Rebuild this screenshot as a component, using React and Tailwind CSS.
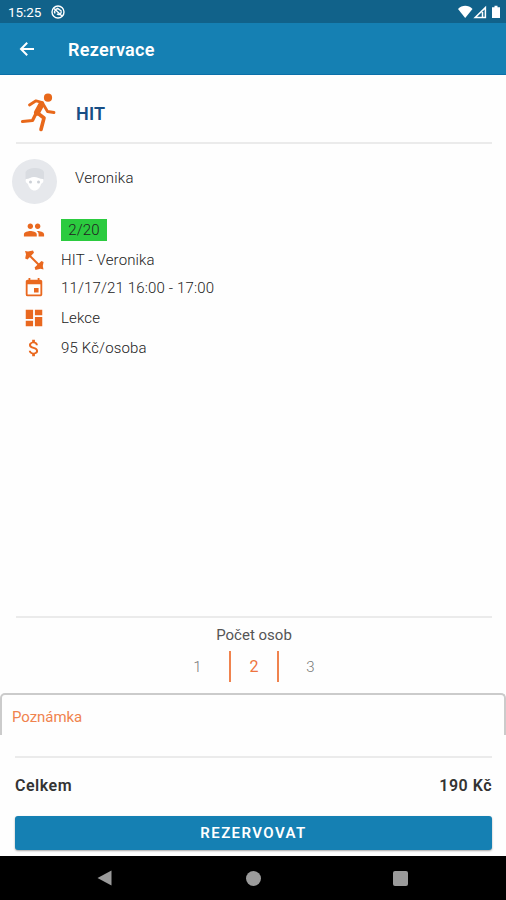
import { MdAttachMoney, MdDashboard, MdEvent, MdPeople } from 'react-icons/md'

const DETAILS = [
  { id: 'capacity', icon: MdPeople, text: '2/20', badge: true, rowClass: 'h-[30px]' },
  { id: 'lesson', icon: DumbbellIcon, text: 'HIT - Veronika', rowClass: 'h-[29px]' },
  { id: 'date', icon: MdEvent, text: '11/17/21 16:00 - 17:00', rowClass: 'h-[28px]' },
  { id: 'type', icon: MdDashboard, text: 'Lekce', rowClass: 'h-[31px]' },
  { id: 'price', icon: MdAttachMoney, text: '95 Kč/osoba', rowClass: 'h-[30px]' },
]

export default function App() {
  return (
    <div className="flex h-[900px] w-[506px] flex-col overflow-hidden bg-[#fefefe] font-['Roboto',sans-serif] text-[#555]">
      <StatusBar />

      <header className="flex h-[52px] shrink-0 items-center border-b border-[#0b6fa8] bg-[#1580b3] pl-[17px] text-white">
        <BackIcon />
        <h1 className="ml-[31px] pt-[2px] text-[18px] font-semibold tracking-[0.3px]">Rezervace</h1>
      </header>

      <main className="flex min-h-0 flex-1 flex-col">
        <div className="mr-[14px] ml-4 flex h-[69px] shrink-0 items-center border-b-2 border-[#ebebeb] pt-[6px]">
          <RunnerIcon />
          <h2 className="ml-[16px] pt-[4px] text-[18px] font-semibold tracking-[0.2px] text-[#174e85]">HIT</h2>
        </div>

        <div className="mt-[14px] flex h-[46px] shrink-0 items-center pl-3">
          <Avatar />
          <span className="-mt-[5px] ml-[18px] text-[15px] font-light tracking-[0.2px] text-[#222]">Veronika</span>
        </div>

        <ul className="mt-[11px] flex flex-col">
          {DETAILS.map((d) => (
            <DetailRow key={d.id} {...d} />
          ))}
        </ul>

        {/* Number of people */}
        <section className="mt-auto mr-[14px] ml-4 h-[77px] shrink-0 border-t-2 border-[#ebebeb]">
          <p className="pt-[6px] text-center text-[15px] leading-[22px]">Počet osob</p>
          <div className="mt-[5px] flex justify-center text-[16px]">
            <span className="flex h-[31px] w-[63px] items-center justify-center pt-[2px] text-[15px] font-light text-[#777]">
              1
            </span>
            <span className="flex h-[31px] w-[50px] items-center justify-center border-x-2 border-[#f0834e] pt-px text-[16px] text-[#ee7440]">
              2
            </span>
            <span className="flex h-[31px] w-[63px] items-center justify-center pt-[2px] text-[15px] font-light text-[#777]">
              3
            </span>
          </div>
        </section>

        <div className="h-[42px] shrink-0 rounded-t-[5px] border-2 border-b-0 border-[#cbcbcb] pt-[11px] pl-[10px] text-[15px] leading-[22px] tracking-[-0.05px] text-[#f0834e]">
          Poznámka
        </div>

        <div className="mt-[21px] mr-[14px] ml-[15px] flex h-[60px] shrink-0 items-center justify-between border-t-2 border-[#ebebeb] pb-[3px] text-[16px] font-semibold text-[#333]">
          <span className="tracking-[0.5px]">Celkem</span>
          <span className="tracking-[0.5px]">190 Kč</span>
        </div>

        <button className="mr-[14px] mb-[6px] ml-[15px] flex h-[34px] shrink-0 items-center justify-center rounded-[3px] bg-[#1580b3] text-[15px] font-semibold tracking-[1.4px] text-white shadow-[0_1px_2px_rgba(0,0,0,0.35)]">
          REZERVOVAT
        </button>
      </main>

      <NavBar />
    </div>
  )
}

function StatusBar() {
  return (
    <div className="flex h-[23px] shrink-0 items-center bg-[#11628a] pr-[5px] pl-2 text-white">
      <span className="pt-[2px] text-[13.5px] tracking-[-0.1px]">15:25</span>
      <svg viewBox="0 0 14 14" className="ml-[10px] size-[14px]" fill="none" stroke="currentColor" strokeWidth="1.4">
        <circle cx="7" cy="7" r="6" />
        <path d="M3 3.5 11 11M4 8.5A3.2 3.2 0 0 1 8 4M6 8.7a2.4 2.4 0 0 0 4-2.5M6 3.2 10.5 6" />
      </svg>
      {/* wifi, signal, battery */}
      <svg viewBox="0 0 43 14" className="ml-auto h-[14px] w-[43px]" fill="currentColor">
        <path d="M0 4C4-.2 10.500-.2 14.500 4L7.200 13Z" />
        <path d="M27.400 2.600V12.400H17.200ZM24.500 7v5" fill="none" stroke="currentColor" strokeWidth="1.500" />
        <path d="M36.500 .8h3v1.400h2.500v10.800h-8V2.200h2.500Z" />
      </svg>
    </div>
  )
}

function BackIcon() {
  return (
    <svg viewBox="0 0 20 20" className="size-5" fill="none" stroke="currentColor" strokeWidth="2">
      <path d="M17 10H4M10.200 3.800 4 10l6.200 6.200" />
    </svg>
  )
}

function DetailRow({ icon: Icon, text, badge, rowClass }) {
  return (
    <li className={`flex items-center pl-[23px] text-[15px] font-light tracking-[0.15px] text-[#222] ${rowClass}`}>
      <Icon className="size-[22px] text-[#e9681f]" />
      {badge ? (
        <span className="ml-[16px] flex h-[22px] w-[46px] items-center justify-center bg-[#2bcb3f] pt-px">{text}</span>
      ) : (
        <span className="ml-[16px] pt-px">{text}</span>
      )}
    </li>
  )
}

function DumbbellIcon({ className }) {
  return (
    <svg viewBox="0 0 22 22" className={className} fill="currentColor">
      <path d="M2 2 5 2.600 10 1.500 11 3.800 4.500 10.400 2.200 9.500 3 5.300Z" />
      <path d="m20.500 20.500-3-.8-5 1.200-.9-2.300 6.800-6.600 2.200.9-.8 4Z" />
      <path d="M6 6 16.500 16.500" stroke="currentColor" strokeWidth="2" />
    </svg>
  )
}

function RunnerIcon() {
  return (
    <svg
      viewBox="18 90 42 44"
      className="ml-[2px] h-[44px] w-[42px]"
      fill="none"
      stroke="#e8681a"
      strokeWidth="2.800"
      strokeLinecap="round"
      strokeLinejoin="round"
    >
      <circle cx="48" cy="97.700" r="4.100" fill="#e8681a" stroke="none" />
      <path d="M29.500 105 36 100.800 42.500 102.500" />
      <path d="M44 105.500 47.500 111.500 54 112.500" />
      <path d="M36 113.500 32.500 120.500 22.500 121.500" strokeWidth="3.200" />
      <path d="M41.500 104.300 37 112.500" strokeWidth="6" />
      <path d="M37.500 113 44 118 41 129.500" strokeWidth="3.600" />
    </svg>
  )
}

function Avatar() {
  return (
    <svg viewBox="0 0 45 45" className="size-[45px]">
      <circle cx="22.500" cy="22.500" r="22.500" fill="#e6e8ec" />
      <path d="M13.500 20v-7c2-3 5-4 9-4 5 0 8 1 9.500 4v7Z" fill="#d9dce1" />
      <path
        d="M14 20c3 0 5-2 8-2s6 2 9 2c1 2 0 4-2 5-1 4-3.500 6.500-6.500 6.500S17 29 16 25c-2-1-3-3-2-5Z"
        fill="#fff"
      />
      <circle cx="18.500" cy="23" r="1.500" fill="#cdd1d7" />
      <circle cx="26.500" cy="23" r="1.500" fill="#cdd1d7" />
    </svg>
  )
}

function NavBar() {
  return (
    <nav className="flex h-[44px] shrink-0 items-center justify-between bg-black pr-[98px] pl-[97px] text-[#9b9b9b]">
      <svg viewBox="0 0 15 16" className="h-4 w-[15px]" fill="currentColor">
        <path d="M14.500 .5v15L.5 8Z" />
      </svg>
      <span className="ml-[2px] size-[15px] rounded-full bg-current" />
      <span className="size-[15px] rounded-[2px] bg-current" />
    </nav>
  )
}
